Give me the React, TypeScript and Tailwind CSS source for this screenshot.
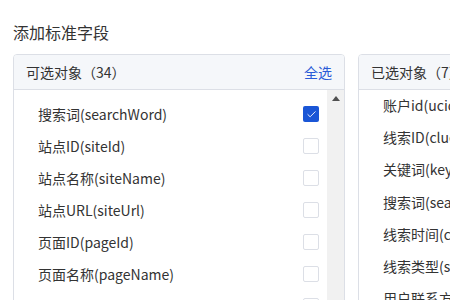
import { Check } from 'lucide-react';

const available = [
    { label: '搜索词(searchWord)', checked: true },
    { label: '站点ID(siteId)', checked: false },
    { label: '站点名称(siteName)', checked: false },
    { label: '站点URL(siteUrl)', checked: false },
    { label: '页面ID(pageId)', checked: false },
    { label: '页面名称(pageName)', checked: false },
    { label: '页面URL(pageUrl)', checked: false },
];

const selected = [
    '账户id(ucid)',
    '线索ID(clueId)',
    '关键词(keyword)',
    '搜索词(searchWord)',
    '线索时间(clueTime)',
    '线索类型(solutionType)',
    '用户联系方式(phone)',
];

export default function App() {
    return (
        <div
            className="w-[450px] h-[300px] overflow-hidden bg-white text-[#333]"
            style={{ fontFamily: '"Noto Sans CJK SC", "Noto Sans", sans-serif' }}
        >
            <div className="pl-[13px] pt-[20px]">
                <h2 className="text-[16px] leading-[24px] text-[#333]">添加标准字段</h2>

                <div className="flex gap-[13px] mt-[10px] w-[800px]">
                    {/* Available */}
                    <div className="w-[332px] h-[300px] shrink-0 border border-[#dcdfe6] rounded-[4px] overflow-hidden">
                        <div className="h-[35px] bg-[#f5f7fa] border-b border-[#dcdfe6] flex items-center justify-between px-[12px]">
                            <span className="text-[14px]">可选对象（34）</span>
                            <span className="text-[14px] text-[#2a5bd7]">全选</span>
                        </div>
                        <div className="flex h-full">
                            <div className="flex-1 pt-[8px] pl-[24px] pr-[8px]">
                                {available.map((item) => (
                                    <div key={item.label} className="h-[32px] flex items-center justify-between">
                                        <span className="text-[14px]">{item.label}</span>
                                        {item.checked ? (
                                            <span className="w-[16px] h-[16px] rounded-[2px] bg-[#1a56d6] flex items-center justify-center">
                                                <Check className="w-[11px] h-[11px] text-white" strokeWidth={2} />
                                            </span>
                                        ) : (
                                            <span className="w-[16px] h-[16px] rounded-[2px] border border-[#dcdfe6] bg-white" />
                                        )}
                                    </div>
                                ))}
                            </div>
                            <div className="w-[17px] bg-[#f1f1f1] flex justify-center pt-[6px]">
                                <svg width="8" height="5" viewBox="0 0 8 5">
                                    <path d="M0 5 L4 0 L8 5 Z" fill="#505050" />
                                </svg>
                            </div>
                        </div>
                    </div>

                    {/* Selected */}
                    <div className="w-[332px] h-[300px] shrink-0 border border-[#dcdfe6] rounded-[4px] overflow-hidden">
                        <div className="h-[35px] bg-[#f5f7fa] border-b border-[#dcdfe6] flex items-center px-[12px]">
                            <span className="text-[14px]">已选对象（7）</span>
                        </div>
                        <div className="pl-[24px] -mt-[1px]">
                            {selected.map((label) => (
                                <div key={label} className="h-[32.3px] flex items-center">
                                    <span className="text-[14px]">{label}</span>
                                </div>
                            ))}
                        </div>
                    </div>
                </div>
            </div>
        </div>
    );
}
